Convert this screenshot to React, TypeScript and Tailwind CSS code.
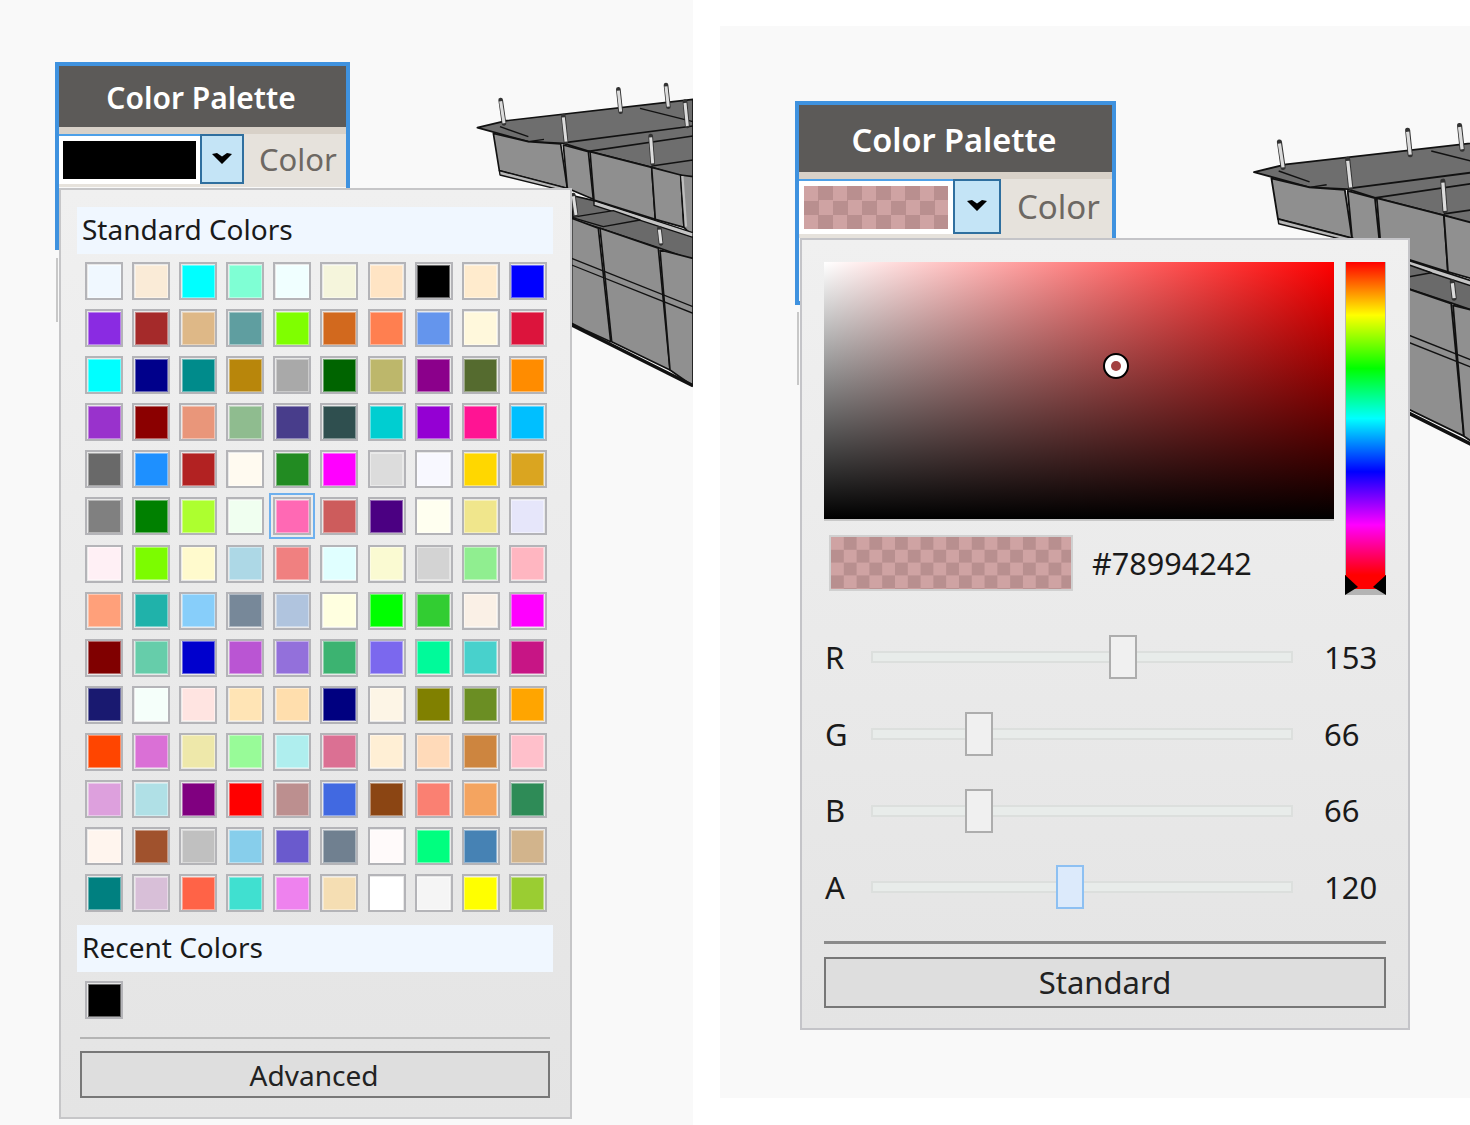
const COLORS = [
  '#f0f8ff','#faebd7','#00ffff','#7fffd4','#f0ffff','#f5f5dc','#ffe4c4','#000000','#ffebcd','#0000ff',
  '#8a2be2','#a52a2a','#deb887','#5f9ea0','#7fff00','#d2691e','#ff7f50','#6495ed','#fff8dc','#dc143c',
  '#00ffff','#00008b','#008b8b','#b8860b','#a9a9a9','#006400','#bdb76b','#8b008b','#556b2f','#ff8c00',
  '#9932cc','#8b0000','#e9967a','#8fbc8f','#483d8b','#2f4f4f','#00ced1','#9400d3','#ff1493','#00bfff',
  '#696969','#1e90ff','#b22222','#fffaf0','#228b22','#ff00ff','#dcdcdc','#f8f8ff','#ffd700','#daa520',
  '#808080','#008000','#adff2f','#f0fff0','#ff69b4','#cd5c5c','#4b0082','#fffff0','#f0e68c','#e6e6fa',
  '#fff0f5','#7cfc00','#fffacd','#add8e6','#f08080','#e0ffff','#fafad2','#d3d3d3','#90ee90','#ffb6c1',
  '#ffa07a','#20b2aa','#87cefa','#778899','#b0c4de','#ffffe0','#00ff00','#32cd32','#faf0e6','#ff00ff',
  '#800000','#66cdaa','#0000cd','#ba55d3','#9370db','#3cb371','#7b68ee','#00fa9a','#48d1cc','#c71585',
  '#191970','#f5fffa','#ffe4e1','#ffe4b5','#ffdead','#000080','#fdf5e6','#808000','#6b8e23','#ffa500',
  '#ff4500','#da70d6','#eee8aa','#98fb98','#afeeee','#db7093','#ffefd5','#ffdab9','#cd853f','#ffc0cb',
  '#dda0dd','#b0e0e6','#800080','#ff0000','#bc8f8f','#4169e1','#8b4513','#fa8072','#f4a460','#2e8b57',
  '#fff5ee','#a0522d','#c0c0c0','#87ceeb','#6a5acd','#708090','#fffafa','#00ff7f','#4682b4','#d2b48c',
  '#008080','#d8bfd8','#ff6347','#40e0d0','#ee82ee','#f5deb3','#ffffff','#f5f5f5','#ffff00','#9acd32',
];

const FONT = "font-['Noto_Sans','Open_Sans',sans-serif]";

function Pegs() {
  const pegs = [
    [92, 60, 102, 130], [445, 28, 452, 95], [588, 15, 595, 80], [280, 108, 288, 185],
    [645, 65, 652, 138], [542, 168, 548, 250], [310, 345, 318, 405], [568, 445, 573, 490],
  ];
  return (
    <g>
      {pegs.map(([a, b, c, d]) => (
        <g key={`${a}-${b}`}>
          <line x1={a} y1={b} x2={c} y2={d} stroke="#333" strokeWidth="14" strokeLinecap="round" />
          <line x1={a} y1={b + 4} x2={c} y2={d} stroke="#dcdcdc" strokeWidth="9" />
        </g>
      ))}
    </g>
  );
}

function Model({ className }: { className: string }) {
  return (
    <svg viewBox="0 0 669 960" className={className} aria-hidden="true">
      <g stroke="#111" strokeLinejoin="round">
        <polygon points="22,143 110,122 669,58 669,300 545,262 360,215 280,190 175,185" fill="#6e6e6e" strokeWidth="5" />
        <polygon points="70,160 175,185 272,192 292,325 88,272" fill="#8f8f8f" strokeWidth="5" />
        <polygon points="280,195 355,215 370,358 292,325" fill="#909090" strokeWidth="5" />
        <polygon points="360,215 545,262 556,418 372,360" fill="#8f8f8f" strokeWidth="5" />
        <polygon points="545,262 632,285 642,442 556,418" fill="#909090" strokeWidth="5" />
        <polygon points="632,285 669,290 669,470 642,442" fill="#909090" strokeWidth="5" />
        <polygon points="300,345 372,362 669,460 669,540 570,505 390,445 310,420" fill="#6a6a6a" strokeWidth="5" />
        <polygon points="372,362 669,458 669,472 372,376" fill="#c4c4c4" strokeWidth="4" />
        <polygon points="305,415 385,445 422,785 345,750 305,730" fill="#8f8f8f" strokeWidth="5" />
        <polygon points="390,445 565,505 600,870 425,785" fill="#8f8f8f" strokeWidth="5" />
        <polygon points="570,510 669,535 669,918 600,870" fill="#909090" strokeWidth="5" />
        <polygon points="305,412 430,392 510,420 400,440" fill="#6a6a6a" strokeWidth="4" />
        <polygon points="88,272 292,325 292,335 90,285" fill="#b8b8b8" strokeWidth="4" />
      </g>
      <g stroke="#111" fill="none">
        <line x1="285" y1="188" x2="669" y2="138" strokeWidth="5" />
        <line x1="355" y1="214" x2="669" y2="168" strokeWidth="5" />
        <line x1="545" y1="258" x2="669" y2="240" strokeWidth="5" />
        <line x1="510" y1="85" x2="669" y2="125" strokeWidth="4" />
        <line x1="175" y1="185" x2="222" y2="178" strokeWidth="4" />
        <line x1="90" y1="140" x2="175" y2="170" strokeWidth="4" />
        <line x1="305" y1="535" x2="669" y2="680" strokeWidth="4" />
        <line x1="305" y1="555" x2="669" y2="700" strokeWidth="4" />
        <line x1="305" y1="735" x2="669" y2="917" strokeWidth="10" />
      </g>
      <line x1="637" y1="288" x2="648" y2="440" stroke="#bdbdbd" strokeWidth="7" />
      <Pegs />
    </svg>
  );
}

function Chevron() {
  return (
    <svg viewBox="0 0 20 11" className="h-[11px] w-5" aria-hidden="true">
      <path d="M0 1 L5 0 L10 3.5 L15 0 L20 1 L10 11 Z" fill="#000" />
    </svg>
  );
}

function Swatch({ color }: { color: string }) {
  return (
    <div className="flex h-[38px] w-[38px] items-center justify-center border-2 border-[#b4b4b8] bg-[#e8e8e8]">
      <div className="h-[33px] w-[33px] border border-white/40" style={{ backgroundColor: color }} />
    </div>
  );
}

function SectionHead({ children }: { children: string }) {
  return (
    <div className="flex h-[47px] items-center bg-[#f0f7ff] pb-[4px] pl-[5px] text-[28px] leading-none text-[#1a1a1a]">
      {children}
    </div>
  );
}

function StandardPopup() {
  return (
    <div className="absolute left-[59px] top-[188px] flex h-[931px] w-[513px] flex-col border-2 border-[#c6c6c8] bg-[linear-gradient(to_bottom,#f0f0f0,#e4e4e4)] pl-[16px] pr-[17px] pt-[17px]">
      <SectionHead>Standard Colors</SectionHead>
      <div className="mt-[8px] grid grid-cols-[repeat(10,38px)] gap-x-[9.1px] gap-y-[9.1px] pl-[8px]">
        {COLORS.map((c, i) => (
          <div key={i} className="relative">
            <Swatch color={c} />
            {i === 54 && (
              <div className="absolute -inset-[4px] border-2 border-[#6eb0ee]" />
            )}
          </div>
        ))}
      </div>
      <div className="mt-[13px]">
        <SectionHead>Recent Colors</SectionHead>
      </div>
      <div className="mt-[9px] pl-[8px]">
        <Swatch color="#000000" />
      </div>
      <div className="mx-[3px] mt-[18px] h-[2px] bg-[#b4b4b4]" />
      <div className="mx-[3px] mt-[12px] flex h-[47px] items-center justify-center border-2 border-[#777] bg-[#dedede] pr-[2px] text-[28px] text-[#222]">
        Advanced
      </div>
    </div>
  );
}

function Slider({ label, value, thumbLeft, active }: { label: string; value: string; thumbLeft: string; active?: boolean }) {
  return (
    <div className="flex h-[76.7px] items-center text-[31px] text-[#1a1a1a]">
      <div className="w-[47px] pl-[1px] leading-none">{label}</div>
      <div className="relative h-[12px] w-[422px] border-2 border-[#dcdfdd] bg-[#e8ecea]">
        <div
          className={`absolute -top-[18px] h-[44px] w-[28px] border-2 ${thumbLeft} ${active ? 'border-[#8dc0f2] bg-[#dceafb]' : 'border-[#adadad] bg-[#f0f0f0]'}`}
        />
      </div>
      <div className="pl-[31px] leading-none">{value}</div>
    </div>
  );
}

function AdvancedPopup() {
  return (
    <div className="absolute left-[80px] top-[212px] flex h-[792px] w-[610px] flex-col border-2 border-[#c4c4c8] bg-[linear-gradient(to_bottom,#f0f0f0,#e4e4e4)] pl-[22px] pr-[22px] pt-[22px]">
      <div className="flex items-start justify-between">
        <div className="flex flex-col">
          <div className="relative h-[259px] w-[510px] border-b-2 border-[#c8c8c8] bg-[linear-gradient(to_top,#000,transparent),linear-gradient(to_right,#fff,#f00)]">
            <div className="absolute left-[279px] top-[91px] flex h-[26px] w-[26px] items-center justify-center rounded-full border-2 border-black bg-white">
              <div className="h-[10px] w-[10px] rounded-full bg-[#a34141]" />
            </div>
          </div>
          <div className="mt-[14px] flex items-center pl-[5px]">
            <div className="h-[56px] w-[244px] border-2 border-[#d0d0d0] bg-[conic-gradient(#b88f8f_25%,#cfa3a3_0_50%,#b88f8f_0_75%,#cfa3a3_0)] bg-size-[25.6px_25.6px]" />
            <div className="pl-[19px] text-[30.6px] leading-none text-[#1a1a1a]">#78994242</div>
          </div>
        </div>
        <div className="relative h-[333px] w-[41px]">
          <div className="h-[313px] w-full border-x border-[#b8b8b8] bg-[linear-gradient(to_bottom,#f00_0%,#ff0_17%,#0f0_34%,#0ff_50%,#00f_67%,#f0f_84%,#f00_100%)]" />
          <div className="h-[14px] w-full bg-[#f00]" />
          <div className="h-[6px] w-full bg-[#b4b4b4]" />
          <svg viewBox="0 0 41 20" className="absolute bottom-0 left-0 h-[20px] w-[41px]" aria-hidden="true">
            <polygon points="0,0 13,12 0,20" fill="#000" />
            <polygon points="41,0 28,12 41,20" fill="#000" />
          </svg>
        </div>
      </div>
      <div className="mt-[24px]">
        <Slider label="R" value="153" thumbLeft="left-[236px]" />
        <Slider label="G" value="66" thumbLeft="left-[92px]" />
        <Slider label="B" value="66" thumbLeft="left-[92px]" />
        <Slider label="A" value="120" thumbLeft="left-[183px]" active />
      </div>
      <div className="mt-[15px] h-[3px] bg-[#8a8a8a]" />
      <div className="mt-[13px] flex h-[51px] items-center justify-center border-2 border-[#777] bg-[#dedede] text-[31px] text-[#222]">
        Standard
      </div>
    </div>
  );
}

function PaletteWindow({ title, size, children }: { title: string; size: 'sm' | 'lg'; children: React.ReactNode }) {
  const lg = size === 'lg';
  return (
    <div className={`border-4 border-[#3f92df] ${lg ? 'h-[204px] w-[321px]' : 'h-[188px] w-[295px]'}`}>
      <div className={`flex items-center justify-center bg-[#5c5a58] font-semibold text-white ${lg ? 'h-[67px] pr-[3px] pt-[4px] text-[32.5px]' : 'h-[61px] pr-[3px] pt-[2px] text-[30px]'}`}>
        {title}
      </div>
      <div className={`border-t-[7px] border-[#d8d1c8] bg-[#e6e2dc] ${lg ? 'h-[66px]' : 'h-[60px]'}`}>{children}</div>
    </div>
  );
}

function SwatchRow({ lg }: { lg?: boolean }) {
  return (
    <div className={`flex items-start ${lg ? 'h-[55px]' : 'h-[50px]'}`}>
      <div className={`flex shrink-0 items-center justify-center border-t-2 border-[#4da0e8] bg-white ${lg ? 'h-[55px] w-[154px]' : 'h-[50px] w-[141px]'}`}>
        {lg ? (
          <div className="h-[43px] w-[144px] bg-[conic-gradient(#b98f8f_25%,#cfa3a3_0_50%,#b98f8f_0_75%,#cfa3a3_0)] bg-size-[29px_29px]" />
        ) : (
          <div className="h-[38px] w-[133px] bg-black" />
        )}
      </div>
      <div className={`flex shrink-0 items-center justify-center border-2 border-[#2f6f9f] bg-[#c4e4f6] pb-[2px] ${lg ? 'h-[55px] w-[48px]' : 'h-[50px] w-[44px]'}`}>
        <Chevron />
      </div>
      <div className={`flex-1 self-center text-[#6d6863] ${lg ? 'pl-[16px] text-[33px]' : 'pl-[15px] text-[31px]'}`}>
        Color
      </div>
    </div>
  );
}

export default function App() {
  return (
    <div className={`flex h-[1125px] w-[1470px] items-start overflow-hidden bg-white ${FONT}`}>
      <div className="relative h-[1125px] w-[693px] shrink-0 overflow-hidden bg-[#f9f9f9] pl-[55px] pt-[62px]">
        <Model className="absolute left-[470px] top-[80px] h-[320px] w-[223px]" />
        <PaletteWindow title="Color Palette" size="sm">
          <SwatchRow />
        </PaletteWindow>
        <div className="ml-[1px] mt-[8px] h-[64px] w-[60px] border-l-2 border-[#c8c8c8]" />
        <StandardPopup />
      </div>
      <div className="relative ml-[27px] mt-[26px] h-[1072px] w-[750px] shrink-0 overflow-hidden bg-[#f9f9f9] pl-[75px] pt-[75px]">
        <Model className="absolute left-[526px] top-[94px] h-[349px] w-[243px]" />
        <PaletteWindow title="Color Palette" size="lg">
          <SwatchRow lg />
        </PaletteWindow>
        <div className="ml-[2px] mt-[7px] h-[73px] w-[60px] border-l-2 border-[#c8c8c8]" />
        <AdvancedPopup />
      </div>
    </div>
  );
}
